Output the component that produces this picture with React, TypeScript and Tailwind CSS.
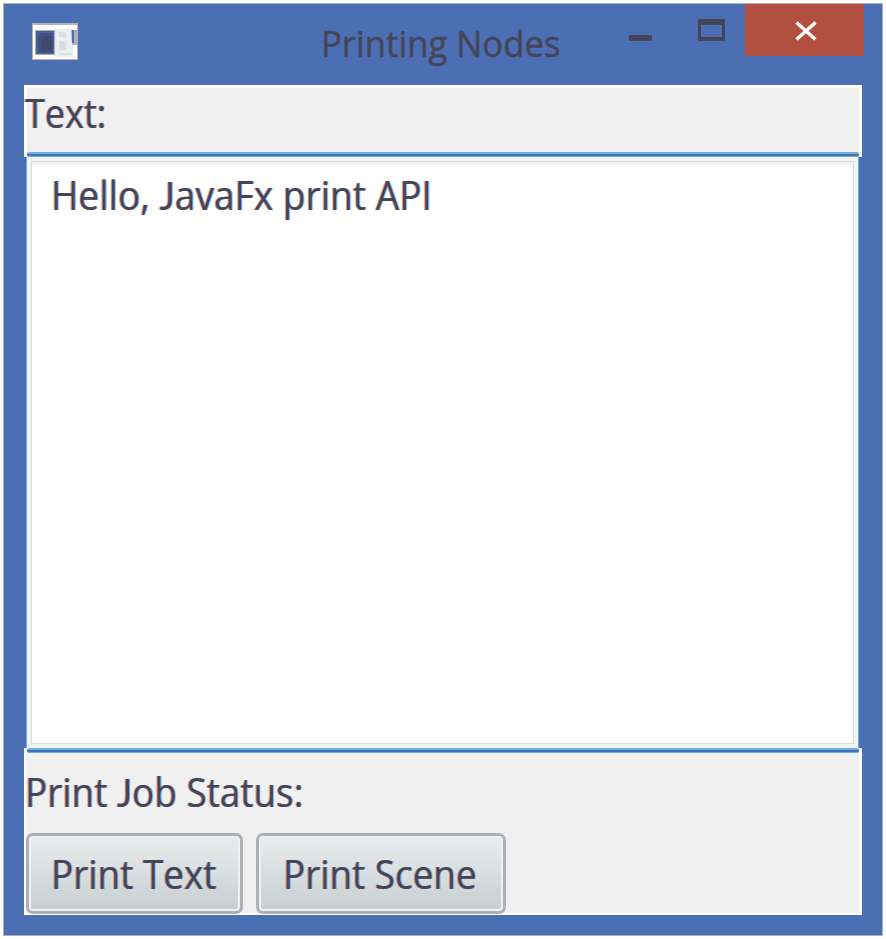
import React from "react";

const fringe =
  "[text-shadow:-1px_0_0_rgba(190,80,62,0.5),1px_0_0_rgba(70,130,205,0.5)]";

function Label({ children, className = "" }: { children: React.ReactNode; className?: string }) {
  return (
    <span
      className={`block w-max origin-left whitespace-pre text-[40px] leading-[48px] text-[#454558] ${fringe} ${className}`}
    >
      {children}
    </span>
  );
}

function J() {
  return <span className="font-['Lato'] text-[39px] leading-none">J</span>;
}

function AppIcon() {
  return (
    <svg width="48" height="40" viewBox="0 0 48 40" className="ml-[27px] mt-[18px] shrink-0">
      <rect x="1" y="1" width="46" height="37" fill="#b2b2b8" />
      <rect x="2" y="3" width="44" height="34" fill="#fff" />
      <rect x="23" y="7" width="19" height="28" fill="#eceff0" />
      <rect x="4" y="8" width="20" height="25" fill="#adb0b8" />
      <rect x="5" y="9" width="18" height="23" fill="#4562a0" />
      <path d="M8 11h14v20H7V15z" fill="#435281" />
      <path d="M10 16l5-2h6v14l-11 2z" fill="#43496a" />
      <path d="M28 10h7v5h-7zM28 19h7v9h-7zM28 31h13v2H28z" fill="#d9dfe1" />
      <path d="M40 8h6v15h-5z" fill="#aeb0b7" />
      <path d="M41 8h2v13h-2z" fill="#4c6eb4" />
    </svg>
  );
}

function TitleBar() {
  return (
    <header className="flex h-[81px] shrink-0 items-start">
      <AppIcon />
      <h1 className="ml-[242px] mt-[16px] w-[300px] whitespace-pre text-[37px] font-normal leading-[46px] text-[#454558]">
        <span className="block w-max origin-left scale-x-[0.937] [-webkit-text-stroke:0.5px_#454558]">
          Printing Nodes
        </span>
      </h1>
      <button className="ml-[8px] mt-[31px] h-[6px] w-[23px] rounded-[1px] bg-[#454558]" aria-label="Minimize" />
      <button
        className="ml-[46px] mt-[15px] h-[22px] w-[27px] border-x-[3px] border-b-[4px] border-t-[6px] border-[#454558]"
        aria-label="Maximize"
      />
      <button className="ml-[20px] flex h-[52px] w-[119px] items-center justify-center bg-[#b34f40]" aria-label="Close">
        <svg width="22" height="20" viewBox="0 0 22 20" className="ml-[2px] mt-[2px]">
          <path d="M1.5 1.5 20.5 18.5M20.5 1.5 1.5 18.5" stroke="#fff" strokeWidth="3.4" />
        </svg>
      </button>
    </header>
  );
}

function FocusLine() {
  return <div className="mx-[3px] h-[5px] shrink-0 rounded-[2px] border-b border-t-2 border-[#68b1dc] bg-[#4c6eb4]" />;
}

function PushButton({ children, className }: { children: React.ReactNode; className: string }) {
  return (
    <button
      className={`h-[81px] rounded-[7px] border-[3px] border-[#adb0b7] bg-linear-to-b from-[#e8ecec] via-[#d8dfe0] to-[#c7cdd0] text-left shadow-[inset_0_0_0_2px_#f0f2f2] ${className}`}
    >
      {children}
    </button>
  );
}

export default function App() {
  return (
    <div className="h-[939px] w-[886px] overflow-hidden bg-white pl-[3px] pt-[3px] font-['Open_Sans','Noto_Sans',sans-serif]">
      <div className="flex h-[933px] w-[880px] flex-col border border-[#adb0b7] bg-[#4c6eb4]">
        <TitleBar />
        <main className="ml-[20px] flex h-[830px] w-[838px] flex-col bg-[#f0f0f0]">
          <div className="h-[67px] shrink-0 border-x-[3px] border-t-[3px] border-white">
            <Label className="-ml-[2px] mt-px scale-x-[0.9]">Text:</Label>
          </div>
          <FocusLine />
          <div className="h-[591px] shrink-0 bg-[#4c6eb4] pl-[2px] pr-[3px]">
            <div className="h-full border-x border-[#68b1dc] bg-white pl-[24px] pt-[14px] shadow-[inset_0_0_0_4px_#f3f3f3,inset_0_0_0_5px_#d9dfe1,inset_0_8px_0_#f0f0f0]">
              <Label className="scale-x-[0.928]">
                Hello, <J />avaFx print API
              </Label>
            </div>
          </div>
          <FocusLine />
          <div className="flex grow flex-col border-b-2 border-l-2 border-r-[3px] border-white">
            <div className="h-[80px] shrink-0 pt-[15px]">
              <Label className="-ml-px scale-x-[0.922]">
                Print <J />ob Status:
              </Label>
            </div>
            <div className="-mb-[2px] flex gap-[13px]">
              <PushButton className="w-[217px] pl-[22px]">
                <Label className="scale-x-[0.922]">Print Text</Label>
              </PushButton>
              <PushButton className="w-[250px] pl-[24px]">
                <Label className="scale-x-[0.921]">Print Scene</Label>
              </PushButton>
            </div>
          </div>
        </main>
      </div>
    </div>
  );
}
